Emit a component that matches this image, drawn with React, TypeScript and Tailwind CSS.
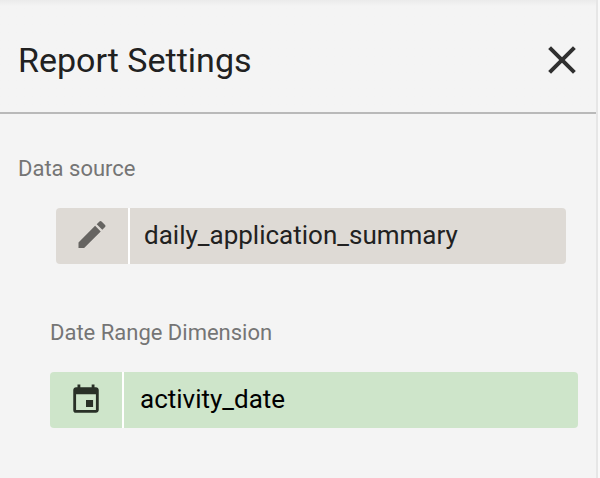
import type { ReactNode } from "react";

export default function App() {
  return (
    <div className="min-h-screen bg-[#f9f9f9] pr-0.5 font-[Roboto,sans-serif]">
      <aside className="min-h-screen border-r-2 border-[#e6e6e6] bg-[#f4f4f4]">
        <header className="flex h-[114px] items-center justify-between border-b-2 border-[#b9b9b9] bg-linear-to-b from-[#ebebeb] to-[#f4f4f4] to-[6px] pt-2 pr-5 pl-[18px]">
          <h1 className="text-[34px] leading-10 text-[#212121]">
            Report Settings
          </h1>
          <button type="button" aria-label="Close">
            <CloseIcon />
          </button>
        </header>

        <section className="px-[18px] pt-10">
          <h2 className="text-[22px] leading-[30px] text-[#757575]">
            Data source
          </h2>
          <div className="mt-6 mr-3 ml-[38px]">
            <FieldChip
              label="daily_application_summary"
              color="bg-[#dedad5]"
              textColor="text-[#212121]"
              padding="pl-3.5"
              icon={<PencilIcon />}
            />
          </div>
        </section>

        <section className="pt-[54px] pr-[18px] pl-[50px]">
          <h2 className="text-[22px] leading-[30px] text-[#757575]">
            Date Range Dimension
          </h2>
          <div className="mt-6">
            <FieldChip
              label="activity_date"
              color="bg-[#cee5ca]"
              textColor="text-black"
              padding="pl-4"
              icon={<CalendarIcon />}
            />
          </div>
        </section>
      </aside>
    </div>
  );
}

type FieldChipProps = {
  label: string;
  color: string;
  textColor: string;
  padding: string;
  icon: ReactNode;
};

function FieldChip({ label, color, textColor, padding, icon }: FieldChipProps) {
  return (
    <button
      type="button"
      className={`flex h-14 w-full overflow-hidden rounded text-left ${color}`}
    >
      <span className="flex h-full w-[74px] shrink-0 items-center justify-center border-r-2 border-white">
        {icon}
      </span>
      <span
        className={`flex h-full min-w-0 items-center pb-0.5 text-[26px] leading-8 ${padding} ${textColor}`}
      >
        {label}
      </span>
    </button>
  );
}

function CloseIcon() {
  return (
    <svg width="28" height="28" viewBox="0 0 28 28" fill="none">
      <path
        d="M1.6 1.6 26.4 26.4M26.4 1.6 1.6 26.4"
        stroke="#303030"
        strokeWidth="4"
      />
    </svg>
  );
}

function PencilIcon() {
  return (
    <svg width="36" height="36" viewBox="0 1 24 24" fill="#666461">
      <path d="M3 17.25V21h3.75L17.81 9.94l-3.75-3.75L3 17.25zM20.71 7.04a.996.996 0 0 0 0-1.41l-2.34-2.34a.996.996 0 0 0-1.41 0l-1.83 1.83 3.75 3.75 1.83-1.83z" />
    </svg>
  );
}

function CalendarIcon() {
  return (
    <svg width="34" height="34" viewBox="0 0 24 24" fill="#293027">
      <path d="M17 12h-5v5h5v-5zM16 1v2H8V1H6v2H5c-1.11 0-1.99.9-1.99 2L3 19a2 2 0 0 0 2 2h14c1.1 0 2-.9 2-2V5c0-1.1-.9-2-2-2h-1V1h-2zm3 18H5V8h14v11z" />
    </svg>
  );
}
